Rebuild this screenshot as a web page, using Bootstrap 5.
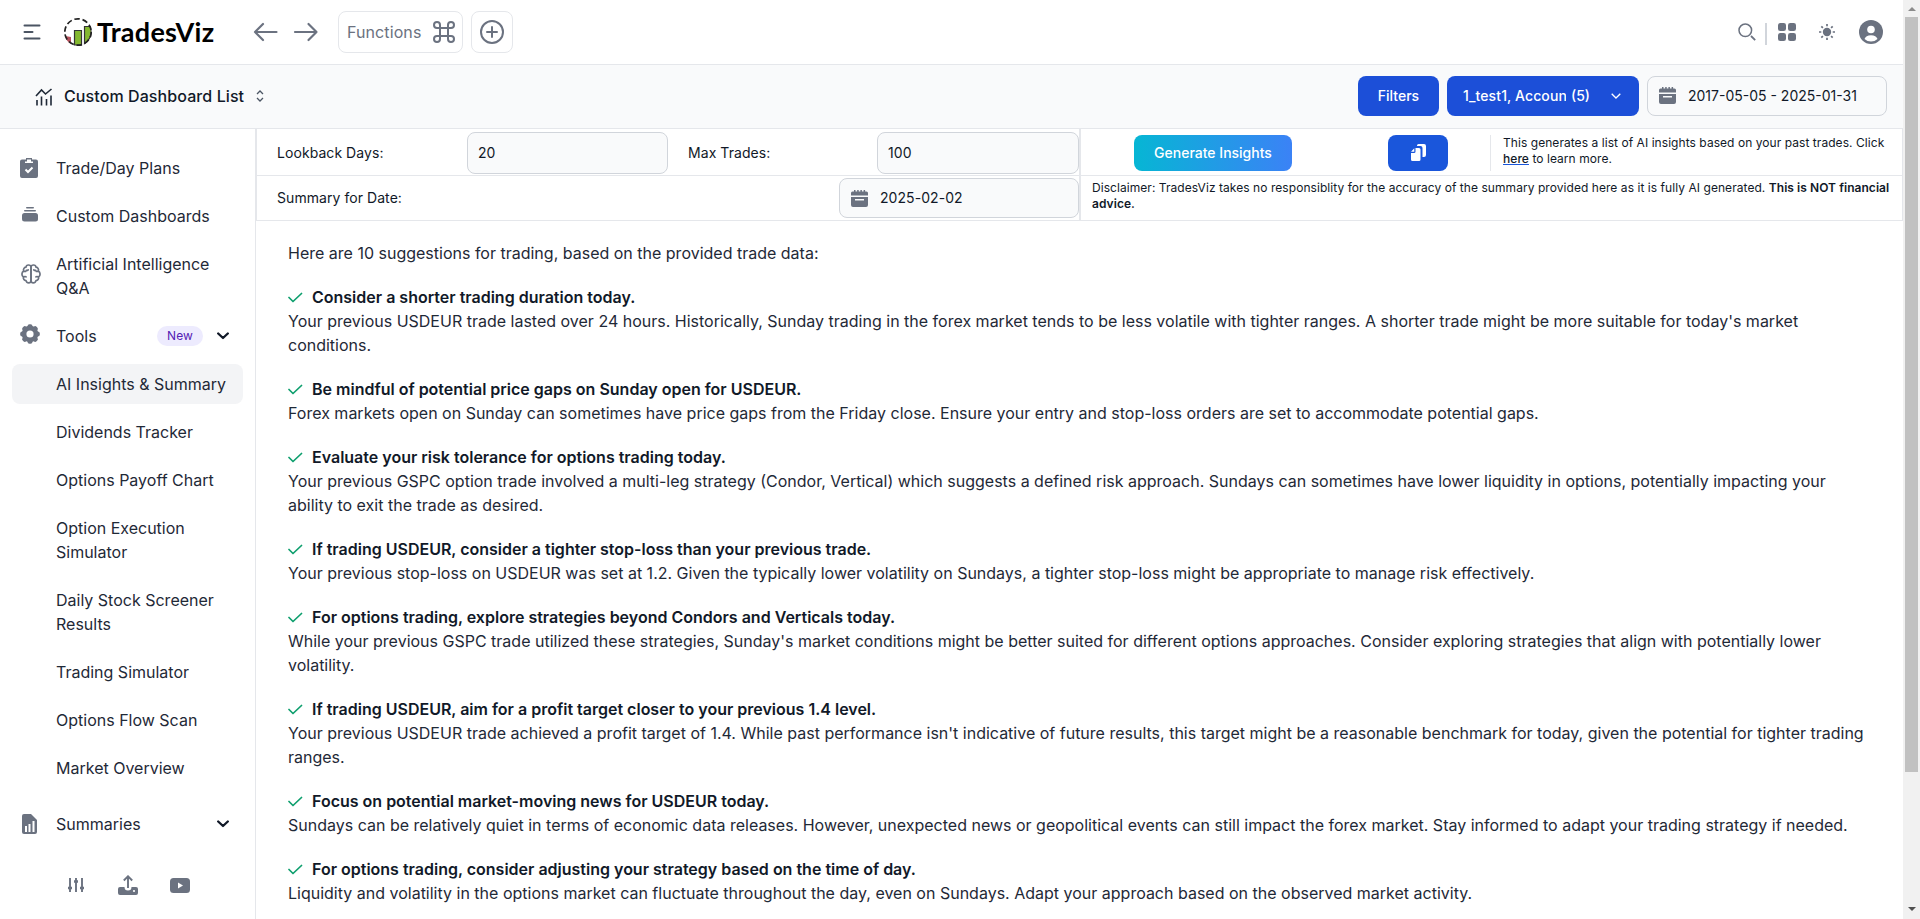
<!DOCTYPE html>
<html lang="en">
<head>
<meta charset="utf-8">
<title>TradesViz - AI Insights &amp; Summary</title>
<meta name="viewport" content="width=device-width, initial-scale=1">
<link href="https://cdn.jsdelivr.net/npm/bootstrap@5.3.0/dist/css/bootstrap.min.css" rel="stylesheet">
<style>
  :root { --line:#e5e7eb; --ink:#111928; --muted:#6b7280; --blue:#1a56db; }
  html, body { height:100%; overflow:hidden; }
  body { font-family:Inter,"Liberation Sans",sans-serif; color:var(--ink); font-size:16px; line-height:24px; background:#fff; }
  svg { display:block; flex:none; }
  .app-bar { height:65px; border-bottom:1px solid var(--line); color:var(--muted); padding:0 20px 0 23px; }
  .brand-name { font-family:Lato,"Open Sans",sans-serif; font-weight:700; font-size:27px; letter-spacing:.25px; line-height:32px; color:#000; margin-left:5px; width:118px; white-space:nowrap; }
  .soft-btn { height:42px; border:1px solid var(--line); border-radius:8px; background:#fff; color:var(--muted); font-size:16px; letter-spacing:.1px; }
  .sub-bar { height:64px; border-bottom:1px solid var(--line); background:#f9fafb; padding:0 16px 2px 35px; }
  .tv-btn { height:40px; border-radius:8px; background:#1c4fd8; color:#fff; font-size:14px; font-weight:500; border:0; }
  .tv-field { height:40px; border:1px solid #d1d5db; border-radius:8px; background:#f9fafb; font-size:14px; line-height:20px; display:flex; align-items:center; }
  .acct { width:103px; overflow:hidden; white-space:nowrap; letter-spacing:.1px; }
  .side { width:256px; border-right:1px solid var(--line); padding:19px 12px 0; color:#1f2937; }
  .side-item { display:flex; align-items:center; padding:8px 12px 8px 44px; min-height:40px; margin-bottom:8px; border-radius:8px; color:#1f2937; text-decoration:none; }
  .side-item.with-icon { padding-left:8px; }
  .side-item.active { background:#f3f4f6; }
  .ico { width:36px; color:var(--muted); flex:none; }
  .tag-new { background:#edebfe; color:#5521b5; font-size:12px; line-height:16px; padding:2px 10px; border-radius:10px; letter-spacing:.1px; }
  .ctl { border-right:1px solid var(--line); font-size:14px; letter-spacing:.06px; }
  .ctl-left { width:825px; border-right:2px solid var(--line); border-left:1px solid var(--line); }
  .ctl-row { border-bottom:1px solid var(--line); display:flex; align-items:center; }
  .r1 { height:47px; padding-top:1px; } .r2 { height:45px; }
  .tiny { font-size:12px; line-height:16px; letter-spacing:.055px; }
  .gen { background:linear-gradient(90deg,#06b6d4,#3b82f6); width:158px; height:36px; }
  .here { color:inherit; text-decoration:underline; text-decoration-color:#1a56db; font-weight:500; }
  .report { padding:20px 32px 0; color:#1f2937; }
  .report p { margin:0 0 20px; }
  .report strong { font-weight:600; display:flex; align-items:center; color:var(--ink); }
  .report strong svg { margin-right:8px; color:#0e9f6e; }
  .sbar { width:17px; background:#f1f1f1; }
  .sthumb { width:13px; height:755px; background:#c1c1c1; }
  .tri { width:0; height:0; border:4px solid transparent; }
</style>
</head>
<body>
<div class="d-flex h-100">
  <div class="flex-grow-1 d-flex flex-column h-100 overflow-hidden">
    <header class="app-bar d-flex align-items-center flex-shrink-0">
      <svg width="18" height="16" viewBox="0 0 18 16" stroke="#4b5563" stroke-width="2" stroke-linecap="round"><path d="M1.500 1.500h15M1.500 8h8M1.500 14.500h15"/></svg>
      <svg style="margin-left:23px" width="28" height="30" viewBox="0 0 28 30"><path d="M1 19l6 1v7c-3-2-5-4-6-8z" fill="#b5505c"/><path d="M10.500 13.500h7v14.500h-7zM20.500 9.500h5.500c2 5 1 11-3 15l-2.500 2z" fill="#84b82f" stroke="#333" stroke-width="1.200"/><circle cx="14" cy="15" r="13.200" fill="none" stroke="#222" stroke-width="1.700" stroke-dasharray="5.500 2.800"/></svg>
      <span class="brand-name">TradesViz</span>
      <svg style="margin-left:38px" width="26" height="20" viewBox="0 0 26 20" fill="none" stroke="currentColor" stroke-width="2.200" stroke-linecap="round" stroke-linejoin="round"><path d="M23.500 10H2M10 2L2 10l8 8"/></svg>
      <svg style="margin-left:14px" width="26" height="20" viewBox="0 0 26 20" fill="none" stroke="currentColor" stroke-width="2.200" stroke-linecap="round" stroke-linejoin="round"><path d="M2 10h21.500M15.500 2l8 8-8 8"/></svg>
      <button class="soft-btn d-flex align-items-center justify-content-between" style="width:125px;margin-left:19px;padding:0 7px 0 8px"><span>Functions</span>
        <svg width="22" height="22" viewBox="0 0 22 22" fill="none" stroke="currentColor" stroke-width="2"><path d="M7 7V4a3 3 0 1 0-3 3h14a3 3 0 1 0-3-3v14a3 3 0 1 0 3-3H4a3 3 0 1 0 3 3z"/></svg></button>
      <button class="soft-btn d-flex align-items-center justify-content-center p-0 ms-2" style="width:42px"><svg width="24" height="24" viewBox="0 0 24 24" fill="none" stroke="currentColor" stroke-width="2" stroke-linecap="round"><circle cx="12" cy="12" r="11"/><path d="M12 7v10M7 12h10"/></svg></button>
      <div class="ms-auto d-flex align-items-center">
        <svg width="18" height="18" viewBox="0 0 18 18" fill="none" stroke="currentColor" stroke-width="1.500"><circle cx="7.300" cy="7.300" r="6.300"/><path d="M13 13l4.200 4.200" stroke-width="1.800"/></svg>
        <span style="width:2px;height:22px;background:#d1d5db;margin:4px 11px 0 9px"></span>
        <svg width="18" height="18" viewBox="0 0 18 18" fill="currentColor"><rect width="8" height="8" rx="2.300"/><rect x="10" width="8" height="8" rx="2.300"/><rect y="10" width="8" height="8" rx="2.300"/><rect x="10" y="10" width="8" height="8" rx="2.300"/></svg>
        <svg style="margin-left:23px" width="16" height="16" viewBox="0 0 16 16" fill="none" stroke="currentColor" stroke-width="1.700"><circle cx="8" cy="8" r="4.200" fill="currentColor" stroke="none"/><path d="M8 0v2.300M8 13.700V16M0 8h2.300M13.700 8H16M2.300 2.300l1.600 1.600M12.100 12.100l1.600 1.600M2.300 13.700l1.600-1.600M12.100 3.900l1.600-1.600"/></svg>
        <svg style="margin-left:24px" width="24" height="24" viewBox="0 0 24 24"><circle cx="12" cy="12" r="12" fill="#6b7280"/><circle cx="12" cy="9.500" r="3.800" fill="#fff"/><path d="M5.500 19a6.700 5 0 0 1 13 0 9.500 9.500 0 0 1-13 0z" fill="#fff"/></svg>
      </div>
    </header>
    <div class="sub-bar d-flex align-items-center flex-shrink-0">
      <svg style="margin-top:2px" width="18" height="18" viewBox="0 0 18 18" fill="none" stroke="#1f2937" stroke-width="1.600"><path d="M1 8l5.500-6 4 4L16.500 1M2 12v5.500M6.500 8.500v9M11.500 11v6.500M16 7.500v10"/></svg>
      <span class="fw-medium" style="margin-left:11px;letter-spacing:.09px">Custom Dashboard List</span>
      <svg style="margin-left:12px" width="8" height="12" viewBox="0 0 8 12" fill="none" stroke="#4b5563" stroke-width="1.300"><path d="M1 4l3-3 3 3M1 8l3 3 3-3"/></svg>
      <div class="ms-auto d-flex gap-2">
        <button class="tv-btn" style="width:81px">Filters</button>
        <button class="tv-btn d-flex align-items-center text-start" style="width:192px;padding:0 16px"><span class="acct">1_test1, Account</span><span style="padding-left:5px">(5)</span><svg class="ms-auto" style="margin-right:2px" width="10" height="6" viewBox="0 0 10 6" fill="none" stroke="#fff" stroke-width="1.300"><path d="M.7.7L5 5 9.300.7"/></svg></button>
        <div class="tv-field" style="width:240px;padding-left:11px"><svg width="17" height="17" viewBox="0 0 17 17" fill="#6b7280"><path d="M1.500 1.500h14A1.500 1.500 0 0 1 17 3v2.500H0V3a1.500 1.500 0 0 1 1.500-1.500zM3 0h1.500v2H3zM6.200 0h1.500v2H6.200zM9.400 0h1.500v2H9.400zM12.600 0h1.500v2h-1.500z"/><path fill-rule="evenodd" d="M0 7h17v8a2 2 0 0 1-2 2H2a2 2 0 0 1-2-2zM4 9v1.500h9V9z"/></svg><span style="margin-left:12px">2017-05-05 - 2025-01-31</span></div>
      </div>
    </div>
    <div class="d-flex flex-grow-1 overflow-hidden">
      <nav class="side flex-shrink-0">
        <a class="side-item with-icon"><span class="ico"><svg width="18" height="20" viewBox="0 0 18 20"><path d="M2 1.500h14a2 2 0 0 1 2 2V18a2 2 0 0 1-2 2H2a2 2 0 0 1-2-2V3.500a2 2 0 0 1 2-2zM6 0h6v3H6z" fill="currentColor"/><path d="M5 5V3.500h2v-2h4v2h2V5z" fill="#fff"/><path d="M5.500 11.500l2.500 2.500 4.500-4.500" fill="none" stroke="#fff" stroke-width="2"/></svg></span>Trade/Day Plans</a>
        <a class="side-item with-icon"><span class="ico"><svg style="margin:-4px 0 0 2px" width="16" height="15" viewBox="0 0 16 15" fill="currentColor"><rect x="4" width="8" height="1.600" rx=".8"/><rect x="2" y="3" width="12" height="1.600" rx=".8"/><rect y="6" width="16" height="8.500" rx="2.500"/></svg></span>Custom Dashboards</a>
        <a class="side-item with-icon"><span class="ico"><svg style="margin:-4px 0 0 1px" width="20" height="20" viewBox="0 0 20 20" fill="none" stroke="currentColor" stroke-width="1.700" stroke-linecap="round" stroke-linejoin="round"><g id="lobe"><path d="M10 3.200v13.600M10 3.200C9.800.3 5.300.2 5 3.200 3 3.500 2 5.300 2.700 7c-2.300 1.300-2.300 4.700-.3 6-.3 2 .8 3.400 2.600 3.600.8 3.200 4.800 3 5 .2M2.700 7c.7.5 1.300.6 2 .4M2.400 13c.8-.5 1.700-.6 2.600-.2M7.200 5.800c-.5.500-1.200.7-1.900.5"/></g><use href="#lobe" transform="matrix(-1 0 0 1 20 0)"/></svg></span>Artificial Intelligence Q&amp;A</a>
        <a class="side-item with-icon"><span class="ico"><svg style="margin-top:-4px" width="20" height="20" viewBox="0 0 20 20"><g fill="currentColor"><circle cx="10" cy="10" r="8.300"/><g><rect x="7.500" y=".2" width="5" height="19.600" rx="2"/><rect x=".2" y="7.500" width="19.600" height="5" rx="2"/></g><g transform="rotate(45 10 10)"><rect x="7.500" y=".2" width="5" height="19.600" rx="2"/><rect x=".2" y="7.500" width="19.600" height="5" rx="2"/></g></g><circle cx="10" cy="10" r="3.600" fill="#fff"/></svg></span>Tools<span class="tag-new ms-auto">New</span><svg style="margin-left:14px;margin-right:2px" width="12" height="8" viewBox="0 0 12 8" fill="none" stroke="#111928" stroke-width="2.300" stroke-linecap="round" stroke-linejoin="round"><path d="M1.200 1.500L6 6l4.800-4.500"/></svg></a>
        <a class="side-item active">AI Insights &amp; Summary</a>
        <a class="side-item">Dividends Tracker</a>
        <a class="side-item">Options Payoff Chart</a>
        <a class="side-item">Option Execution Simulator</a>
        <a class="side-item">Daily Stock Screener Results</a>
        <a class="side-item">Trading Simulator</a>
        <a class="side-item">Options Flow Scan</a>
        <a class="side-item">Market Overview</a>
        <a class="side-item with-icon mt-3"><span class="ico"><svg style="margin-left:2px" width="15" height="20" viewBox="0 0 15 20"><path d="M2 0h7l6 6v12a2 2 0 0 1-2 2H2a2 2 0 0 1-2-2V2a2 2 0 0 1 2-2z" fill="currentColor"/><path d="M4 12v6M7.500 10v8M11.500 7v11" stroke="#fff" stroke-width="2"/></svg></span>Summaries<svg class="ms-auto" style="margin-right:2px" width="12" height="8" viewBox="0 0 12 8" fill="none" stroke="#111928" stroke-width="2.300" stroke-linecap="round" stroke-linejoin="round"><path d="M1.200 1.500L6 6l4.800-4.500"/></svg></a>
        <div class="d-flex align-items-center" style="color:#6b7280;padding:23px 0 0 56px">
          <svg width="16" height="16" viewBox="0 0 16 16" stroke="currentColor" stroke-width="1.900" fill="none"><path d="M2 1v14M8 1v14M14 1v14"/><path d="M0 11h4M6 4.500h4M12 11h4" stroke-width="2.500"/></svg>
          <svg style="margin-left:34px" width="20" height="20" viewBox="0 0 20 20"><path d="M2 12h4.500a3.500 3.500 0 0 0 7 0H18a2 2 0 0 1 2 2v4a2 2 0 0 1-2 2H2a2 2 0 0 1-2-2v-4a2 2 0 0 1 2-2z" fill="currentColor"/><path d="M10 13V1.500M5.800 5.500L10 1.300l4.200 4.200" fill="none" stroke="currentColor" stroke-width="1.900"/><circle cx="16" cy="16" r="1.100" fill="#fff"/></svg>
          <svg style="margin-left:32px" width="20" height="15" viewBox="0 0 20 15"><rect width="20" height="15" rx="3.500" fill="currentColor"/><path d="M8 4.500l5 3-5 3z" fill="#fff"/></svg>
        </div>
      </nav>
      <main class="flex-grow-1">
        <div class="ctl d-flex">
          <div class="ctl-left flex-shrink-0">
            <div class="ctl-row r1"><span style="width:190px;padding-left:20px">Lookback Days:</span><div class="tv-field" style="width:201px;height:42px;padding-left:10px;margin-left:20px">20</div><span style="margin-left:20px;width:189px">Max Trades:</span><div class="tv-field ms-auto" style="width:202px;height:42px;padding-left:10px">100</div></div>
            <div class="ctl-row r2"><span style="padding-left:20px">Summary for Date:</span><div class="tv-field ms-auto" style="width:240px;padding-left:11px"><svg width="17" height="17" viewBox="0 0 17 17" fill="#6b7280"><path d="M1.500 1.500h14A1.500 1.500 0 0 1 17 3v2.500H0V3a1.500 1.500 0 0 1 1.500-1.500zM3 0h1.500v2H3zM6.200 0h1.500v2H6.200zM9.400 0h1.500v2H9.400zM12.600 0h1.500v2h-1.500z"/><path fill-rule="evenodd" d="M0 7h17v8a2 2 0 0 1-2 2H2a2 2 0 0 1-2-2zM4 9v1.500h9V9z"/></svg><span style="margin-left:12px">2025-02-02</span></div></div>
          </div>
          <div class="flex-grow-1">
            <div class="ctl-row r1"><button class="tv-btn gen" style="margin-left:53px">Generate Insights</button>
              <button class="tv-btn d-flex align-items-center justify-content-center" style="width:60px;height:36px;margin-left:96px;background:#1a56db"><svg width="15" height="17" viewBox="0 0 15 17" fill="#fff"><path d="M6 1.500A1.500 1.500 0 0 1 7.500 0H13a2 2 0 0 1 2 2v9a2 2 0 0 1-2 2h-1.500V4a2 2 0 0 0-2-2H6z"/><path d="M4.500 4H8a1.500 1.500 0 0 1 1.500 1.500v10A1.500 1.500 0 0 1 8 17H1.500A1.500 1.500 0 0 1 0 15.500V9h3a1.500 1.500 0 0 0 1.500-1.500zM3.300 4.200V7.800H0z"/></svg></button>
              <div class="tiny" style="margin-left:42px;border-left:1px solid #e5e7eb;height:36px;padding:0 0 0 12px;flex:1">This generates a list of AI insights based on your past trades. Click<br><a class="here">here</a> to learn more.</div></div>
            <div class="ctl-row r2 tiny" style="padding:0 8px 4px 11px"><span>Disclaimer: TradesViz takes no responsiblity for the accuracy of the summary provided here as it is fully AI generated. <b class="fw-semibold">This is NOT financial advice.</b></span></div>
          </div>
        </div>
        <div class="report" id="report"><p>Here are 10 suggestions for trading, based on the provided trade data:</p></div>
      </main>
    </div>
  </div>
  <div class="sbar d-flex flex-column align-items-center flex-shrink-0">
    <div class="d-flex justify-content-center" style="height:17px;padding-top:3px"><span class="tri" style="border-bottom-color:#8b8b8b"></span></div>
    <div class="sthumb"></div>
    <div class="mt-auto d-flex justify-content-center" style="height:12px"><span class="tri" style="border-top-color:#505050"></span></div>
  </div>
</div>
<script src="https://cdn.jsdelivr.net/npm/bootstrap@5.3.0/dist/js/bootstrap.bundle.min.js"></script>
<script>
  const tips = [
    ["Consider a shorter trading duration today.", "Your previous USDEUR trade lasted over 24 hours. Historically, Sunday trading in the forex market tends to be less volatile with tighter ranges. A shorter trade might be more suitable for today's market conditions."],
    ["Be mindful of potential price gaps on Sunday open for USDEUR.", "Forex markets open on Sunday can sometimes have price gaps from the Friday close. Ensure your entry and stop-loss orders are set to accommodate potential gaps."],
    ["Evaluate your risk tolerance for options trading today.", "Your previous GSPC option trade involved a multi-leg strategy (Condor, Vertical) which suggests a defined risk approach. Sundays can sometimes have lower liquidity in options, potentially impacting your ability to exit the trade as desired."],
    ["If trading USDEUR, consider a tighter stop-loss than your previous trade.", "Your previous stop-loss on USDEUR was set at 1.2. Given the typically lower volatility on Sundays, a tighter stop-loss might be appropriate to manage risk effectively."],
    ["For options trading, explore strategies beyond Condors and Verticals today.", "While your previous GSPC trade utilized these strategies, Sunday's market conditions might be better suited for different options approaches. Consider exploring strategies that align with potentially lower volatility."],
    ["If trading USDEUR, aim for a profit target closer to your previous 1.4 level.", "Your previous USDEUR trade achieved a profit target of 1.4. While past performance isn't indicative of future results, this target might be a reasonable benchmark for today, given the potential for tighter trading ranges."],
    ["Focus on potential market-moving news for USDEUR today.", "Sundays can be relatively quiet in terms of economic data releases. However, unexpected news or geopolitical events can still impact the forex market. Stay informed to adapt your trading strategy if needed."],
    ["For options trading, consider adjusting your strategy based on the time of day.", "Liquidity and volatility in the options market can fluctuate throughout the day, even on Sundays. Adapt your approach based on the observed market activity."]
  ];
  const check = '<svg width="16" height="16" viewBox="0 0 16 16" fill="none" stroke="currentColor" stroke-width="1.700" stroke-linecap="round" stroke-linejoin="round"><path d="M1 8.500l4 4 8.500-8"/></svg>';
  document.getElementById("report").insertAdjacentHTML("beforeend", tips.map(t => `<p><strong>${check}${t[0]}</strong>${t[1]}</p>`).join(""));
</script>
</body>
</html>
